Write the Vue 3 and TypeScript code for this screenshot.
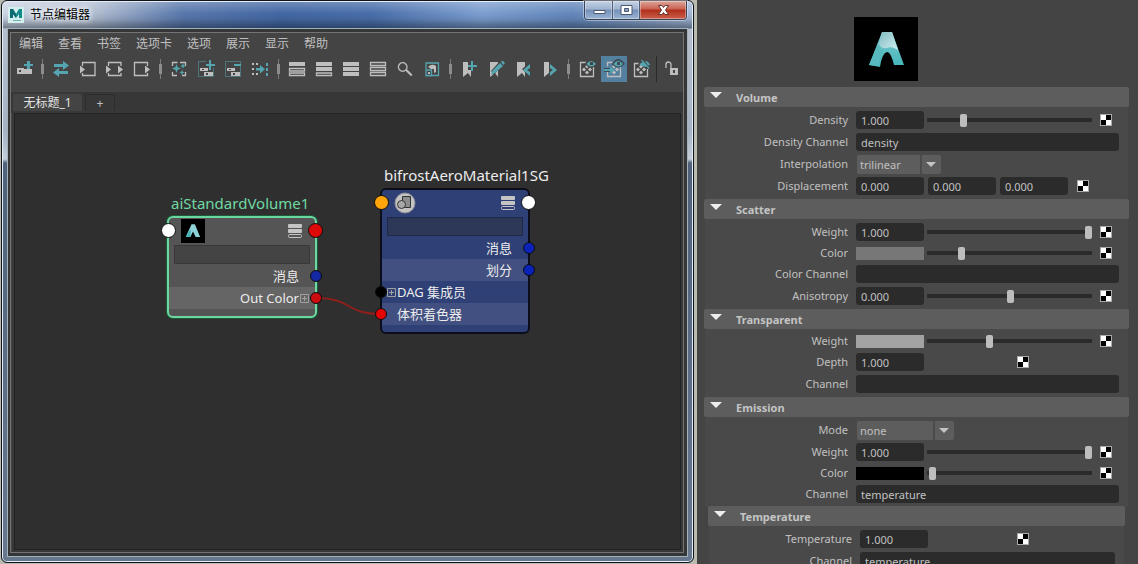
<script setup lang="ts">
import { ref } from 'vue'

type Tone = 'g' | 't' | 'gs' | 'ts' | 'd' | 'dash' | 'gdash'
type Part = [Tone, string]
interface Tool { label: string; parts?: Part[]; active?: boolean; sep?: boolean }

const menus = ['编辑', '查看', '书签', '选项卡', '选项', '展示', '显示', '帮助']

const eye = 'M12.500 8Q17 2 22 8Q17 13 12.500 8Z'
const eyeGap = 'M10.500 8Q17-2 24 8Q17 15 10.500 8Z'
const pupil = 'M16 6h3v3h-3z'
const dice = 'M13 8.500l2 2-2 2-2-2zM10 11.500l2 2-2 2-2-2zM16 11.500l2 2-2 2-2-2zM13 14.500l2 2-2 2-2-2z'
const flag = 'M7 6h8v15l-3-4-5 4z'
const twoBoxes = 'M7 12h8v3H7zM11 16h9v4h-9z'

const tools: Tool[] = [
  { label: '创建节点', parts: [['g', 'M6 12h8v1h7v5H6z'], ['d', 'M8 14h2v2H8z'], ['d', 'M13 4h8v9h-8z'], ['t', 'M16 5h3v3h3v2h-3v3h-3v-3h-3V8h3z'], ['g', 'M14 14h7v4h-7z']] },
  { label: '', sep: true },
  { label: '重新排列图表', parts: [['t', 'M6 8h9V5l6 4.500-6 4.500v-3H6z'], ['t', 'M20 15h-9v-3l-6 4.500 6 4.500v-3h9z']] },
  { label: '输入连接', parts: [['gs', 'M7.500 10V6.500h12.500v13H7.500V17'], ['g', 'M5 9.500l5 4-5 4z']] },
  { label: '输入和输出连接', parts: [['gs', 'M6.500 10V6.500h12.500V10M6.500 17v2.500h12.500V17'], ['g', 'M4 9.500l5 4-5 4zM16 9.500l5 4-5 4z']] },
  { label: '输出连接', parts: [['gs', 'M18.500 10V6.500h-13v13h13V17'], ['g', 'M16 9.500l5 4-5 4z']] },
  { label: '', sep: true },
  { label: '清除图表', parts: [['gs', 'M6.500 10V6.500h5M14 6.500h5.500V10M19.500 16v3.500H16M11 19.500H6.500V16'], ['t', 'M10.500 8l1.200 3.300L15 12.500l-3.300 1.200L10.500 17l-1.200-3.300L6 12.500l3.300-1.200zM17 7l.8 2.200L20 10l-2.200.8L17 13l-.8-2.200L14 10l2.200-.8zM16 14l.8 1.700 1.700.8-1.700.8L16 19l-.8-1.700-1.700-.8 1.700-.8z']] },
  { label: '将选定节点添加到图表', parts: [['dash', 'M5.500 5.500h15v15h-15z'], ['g', twoBoxes], ['d', 'M9 13h2v1H9zM13 17h2v2h-2z'], ['d', 'M13 4h9v8h-9z'], ['t', 'M16 4h2v4h4v2h-4v4h-2v-4h-3V8h3z']] },
  { label: '从图表中移除选定节点', parts: [['dash', 'M5.500 5.500h15v15h-15z'], ['g', twoBoxes], ['d', 'M9 13h2v1H9zM13 17h2v2h-2z'], ['t', 'M14 8h7v2h-7z']] },
  { label: '扩展节点', parts: [['g', 'M5 7h2v2H5zM5 12h2v2H5zM5 17h2v2H5zM9 17h2v2H9zM9 7h2v2H9z'], ['t', 'M9 12h4V9l5 4.200-5 4.200V14.500H9zM19 7h2v3h-2zM19 12h2v3h-2zM19 17h2v3h-2z']] },
  { label: '', sep: true },
  { label: '简单模式', parts: [['g', 'M5 6h16v4H5z'], ['gs', 'M5.500 12.500h15v2.500h-15zM5.500 17h15v2.500h-15z']] },
  { label: '已连接模式', parts: [['g', 'M5 6h16v4H5zM5 11h16v4H5z'], ['gs', 'M5.500 17h15v2.500h-15z']] },
  { label: '完全模式', parts: [['g', 'M5 6h16v4H5zM5 11h16v4H5zM5 16h16v4H5z']] },
  { label: '自定义模式', parts: [['gs', 'M5.500 6.500h15v3h-15zM5.500 11.500h15v3h-15zM5.500 16.500h15v3h-15z']] },
  { label: '过滤器', parts: [['gs', 'M15 11a4.300 4.300 0 1 1-8.600 0a4.300 4.300 0 1 1 8.600 0'], ['gs', 'M14 14.200l5.500 5.500M14.500 13.800l5.500 5.500']] },
  { label: '样例大小', parts: [['ts', 'M7 7h12.500v12.500H7z'], ['g', 'M9 11q4-4 8-1v6l-2 1v-4h-3z'], ['d', 'M6 13h7v7H6z'], ['ts', 'M7 14h5.500v5.500H7z'], ['g', 'M9 16h2v2H9z']] },
  { label: '', sep: true },
  { label: '创建书签', parts: [['g', flag], ['d', 'M12 4h9v10h-9z'], ['t', 'M15 5h2v4h4v2h-4v4h-2v-4h-3V9h3z']] },
  { label: '编辑书签', parts: [['g', flag], ['d', 'M8 15L17 5h5L11 19z'], ['t', 'M8 19l1-4 8-8 3 3-8 7zM18 6l1.500-1.500L22 7l-1.500 2z']] },
  { label: '上一个书签', parts: [['g', flag], ['d', 'M12 13l7-6h3v13h-3z'], ['t', 'M20 8v4l-3 2 3 2v4l-7-6z']] },
  { label: '下一个书签', parts: [['g', flag], ['d', 'M12 6h3l8 7-8 8h-3z'], ['t', 'M13 8v4l3 2-3 2v4l7-6z']] },
  { label: '', sep: true },
  { label: '切换样例显示', parts: [['gs', 'M13 6.500H6.500v14h13V11'], ['g', dice], ['d', eyeGap], ['t', eye], ['d', pupil]] },
  { label: '连接时展开', active: true, parts: [['gs', 'M13 6.500H6.500v4M6.500 16v4.500h13V11'], ['g', dice], ['d', eyeGap], ['t', eye], ['d', pupil], ['d', 'M3 12h7v4H3z'], ['t', 'M3 13h6v-2.500l5 3.500-5 3.500V15H3z']] },
  { label: '隐藏样例', parts: [['gs', 'M11 7.500H6.500v13h13V13'], ['g', dice], ['d', 'M10 8Q15 1 22 6V13Z'], ['t', 'M11.500 8.500Q13 6 15 6l-2-1.500 1-1 7.500 8.500-1 1-2-2.500q-4 1-7-2zM17 5q3.500 0 5 4l-2 .5z']] },
]

interface Port { side: 'in' | 'out'; color: string }
interface Attr { text: string; port: Port; expand?: boolean; lit?: boolean }
interface GraphNode {
  id: string; kind: 'volume' | 'group'; x: number; y: number; w: number
  ports: Port[]; attrs: Attr[]
}

const nodes: GraphNode[] = [
  {
    id: 'aiStandardVolume1', kind: 'volume', x: 152, y: 102, w: 150,
    ports: [{ side: 'in', color: '#ffffff' }, { side: 'out', color: '#dd0808' }],
    attrs: [
      { text: '消息', port: { side: 'out', color: '#1528a4' } },
      { text: 'Out Color', port: { side: 'out', color: '#cc0c10' }, expand: true, lit: true },
    ],
  },
  {
    id: 'bifrostAeroMaterial1SG', kind: 'group', x: 365, y: 74, w: 150,
    ports: [{ side: 'in', color: '#ffa50a' }, { side: 'out', color: '#ffffff' }],
    attrs: [
      { text: '消息', port: { side: 'out', color: '#0b22b8' } },
      { text: '划分', port: { side: 'out', color: '#0b22b8' }, lit: true },
      { text: 'DAG 集成员', port: { side: 'in', color: '#000000' }, expand: true },
      { text: '体积着色器', port: { side: 'in', color: '#e40505' }, lit: true },
    ],
  },
]

interface Row {
  label: string
  nums?: string[]
  text?: string
  choice?: string
  wide?: boolean
  swatch?: string
  slider?: number
  map?: 'near' | 'far' | 'end'
}
interface Section { title: string; nested?: boolean; rows: Row[] }

const sections = ref<Section[]>([
  { title: 'Volume', rows: [
    { label: 'Density', nums: ['1.000'], slider: 209, map: 'end' },
    { label: 'Density Channel', text: 'density' },
    { label: 'Interpolation', choice: 'trilinear' },
    { label: 'Displacement', nums: ['0.000', '0.000', '0.000'], map: 'near' },
  ] },
  { title: 'Scatter', rows: [
    { label: 'Weight', nums: ['1.000'], slider: 1000, map: 'end' },
    { label: 'Color', swatch: '#777777', slider: 196, map: 'end' },
    { label: 'Color Channel', text: '' },
    { label: 'Anisotropy', nums: ['0.000'], slider: 506, map: 'end' },
  ] },
  { title: 'Transparent', rows: [
    { label: 'Weight', swatch: '#a3a3a3', slider: 376, map: 'end' },
    { label: 'Depth', nums: ['1.000'], map: 'far' },
    { label: 'Channel', text: '' },
  ] },
  { title: 'Emission', rows: [
    { label: 'Mode', choice: 'none', wide: true },
    { label: 'Weight', nums: ['1.000'], slider: 1000, map: 'end' },
    { label: 'Color', swatch: '#000000', slider: 13, map: 'end' },
    { label: 'Channel', text: 'temperature' },
  ] },
  { title: 'Temperature', nested: true, rows: [
    { label: 'Temperature', nums: ['1.000'], map: 'far' },
    { label: 'Channel', text: 'temperature' },
  ] },
])
</script>

<template>
  <main class="app">
    <section class="window">
      <header class="titlebar">
        <svg class="logo" viewBox="0 0 16 16" aria-hidden="true">
          <rect width="16" height="16" fill="#d5eeee" />
          <path d="M2 11V2h3l3 5 3-5h3v9h-3V7l-3 4-3-4v4z" fill="#14898c" />
          <path d="M2 2h3l3 5v4L5 7v4H2z" fill="#0b6c74" />
          <path d="M5 13.500h8" stroke="#6ab4b4" />
        </svg>
        <h1>节点编辑器</h1>
        <div class="controls">
          <button class="min" aria-label="最小化"><svg viewBox="0 0 16 12"><path d="M3 6.500h11v3H3z" fill="#fff" stroke="#4c5870" /></svg></button>
          <button class="max" aria-label="最大化"><svg viewBox="0 0 16 12"><path d="M3 1.500h11v9H3z" fill="#fff" stroke="#4c5870" /><path d="M6.500 4.500h4v3h-4z" fill="#8fa4c0" stroke="#4c5870" /></svg></button>
          <button class="close" aria-label="关闭"><svg viewBox="0 0 16 12"><path d="M3.500 1.500h3.500l1.500 2 1.500-2h3.500L10.500 6l3 4.500H10l-1.500-2-1.500 2H3.500l3-4.500z" fill="#fff" stroke="#6a3430" /></svg></button>
        </div>
      </header>

      <div class="client">
        <div class="frame">
          <nav class="menubar">
            <button v-for="m in menus" :key="m">{{ m }}</button>
          </nav>

          <div class="toolbar">
            <template v-for="(t, i) in tools" :key="i">
              <span v-if="t.sep" class="sep"></span>
              <button v-else class="tool" :class="{ active: t.active }" :aria-label="t.label">
                <svg viewBox="0 0 26 26"><path v-for="(p, k) in t.parts" :key="k" :class="p[0]" :d="p[1]" /></svg>
              </button>
            </template>
            <button class="tool lock" aria-label="锁定">
              <svg viewBox="0 0 26 26"><path class="gs" d="M8 12V8.500a2.500 2.500 0 0 1 5 0V13" /><path class="g" d="M12 12h8v7h-8z" /><path class="d" d="M15 14h2v3h-2z" /></svg>
            </button>
          </div>

          <div class="tabs">
            <button class="tab current">无标题_1</button>
            <button class="tab add">+</button>
          </div>

          <div class="canvas">
            <svg class="wires" aria-hidden="true"><path d="M301 184C338 184 329 200 366 200" /></svg>
            <article
              v-for="n in nodes" :key="n.id" class="node" :class="n.kind"
              :style="{ left: n.x + 'px', top: n.y + 'px', width: n.w + 'px' }"
            >
              <h2>{{ n.id }}</h2>
              <div class="head">
                <svg v-if="n.kind === 'volume'" width="24" height="24" viewBox="0 0 64 64" aria-hidden="true">
                  <rect width="64" height="64" fill="#000" />
                  <path d="M28 14h9l14 34H39l-7-15-7 15H13z" fill="#8dd3d8" />
                  <path d="M27 30l-2 18H13l7-17z" fill="#4fb3ba" />
                </svg>
                <svg v-else class="group-icon" width="22" height="22" viewBox="0 0 22 22" aria-hidden="true">
                  <circle cx="11" cy="11" r="10" fill="#c4c4c4" stroke="#8f8f96" />
                  <path d="M8.500 4.500h8v11h-8z" fill="#8c8c8c" stroke="#333" />
                  <circle cx="7.500" cy="12.500" r="4" fill="#a8a8a8" stroke="#333" />
                </svg>
                <svg class="bars" width="14" height="14" viewBox="0 0 14 14" aria-hidden="true">
                  <rect width="14" height="4" rx="1" fill="#c4c4c4" /><rect y="5" width="14" height="4" rx="1" fill="#c4c4c4" />
                  <rect x=".5" y="10.500" width="13" height="3" rx="1" fill="none" stroke="#c4c4c4" />
                </svg>
                <i v-for="p in n.ports" :key="p.side" class="port big" :class="p.side" :style="{ background: p.color }"></i>
              </div>
              <input class="filter" type="text" :aria-label="n.id + ' 过滤'" />
              <div v-for="a in n.attrs" :key="a.text" class="attr" :class="[a.port.side, { lit: a.lit }]">
                <span>{{ a.text }}</span>
                <button v-if="a.expand" class="expand" :aria-label="'展开 ' + a.text">
                  <svg viewBox="0 0 9 9"><path d="M.5.5h8v8h-8zM4.500 2v5M2 4.500h5" /></svg>
                </button>
                <i class="port" :class="a.port.side" :style="{ background: a.port.color }"></i>
              </div>
            </article>
          </div>
        </div>
      </div>
    </section>

    <aside class="panel">
      <svg class="preview" width="64" height="64" viewBox="0 0 64 64" role="img" aria-label="材质样例">
        <defs>
          <linearGradient id="leg" x1="0" y1="0" x2="0" y2="1"><stop offset="0" stop-color="#7dc9cf" /><stop offset="1" stop-color="#43b5b9" /></linearGradient>
          <linearGradient id="cap" x1="0" y1="0" x2="1" y2="1"><stop offset="0" stop-color="#82bcc2" /><stop offset="1" stop-color="#d0eff1" /></linearGradient>
        </defs>
        <rect width="64" height="64" fill="#000" />
        <path d="M28 15h10l12 33H40Q37 35 33 35Q28 36 26 50L15 48z" fill="url(#leg)" />
        <path d="M28 15h10l6 18Q38 29 33 31Q27 32 25 27z" fill="url(#cap)" />
        <path d="M24 27q1 4 5 7-3 4-4 15L15 48z" fill="#58babf" />
      </svg>

      <section v-for="s in sections" :key="s.title" class="group" :class="{ nested: s.nested }">
        <button class="group-head" aria-expanded="true"><i></i><span>{{ s.title }}</span></button>
        <div class="group-body">
          <div v-for="(r, i) in s.rows" :key="i" class="row" :class="{ short: r.swatch }">
            <label :for="s.title + i">{{ r.label }}</label>
            <div class="ctl">
              <div v-if="r.nums" class="nums">
                <input v-for="(_, k) in r.nums" :id="k === 0 ? s.title + i : undefined" :key="k" v-model="r.nums[k]" class="num" type="text" :aria-label="r.label + ' ' + (k + 1)" />
              </div>
              <input v-if="r.text !== undefined" :id="s.title + i" v-model="r.text" class="long" type="text" />
              <span v-if="r.choice" class="choice" :class="{ wide: r.wide }">
                <select :id="s.title + i" v-model="r.choice"><option>{{ r.choice }}</option></select>
              </span>
              <button v-if="r.swatch" :id="s.title + i" class="swatch" :style="{ background: r.swatch }"></button>
              <input v-if="r.slider !== undefined" v-model.number="r.slider" class="slider" type="range" min="0" max="1000" :aria-label="r.label + ' slider'" />
              <button v-if="r.map" class="map" :class="r.map" :aria-label="r.label + ' map'"></button>
            </div>
          </div>
        </div>
      </section>
    </aside>
  </main>
</template>

<style>
html, body { background: #444; }
</style>

<style scoped>
* { box-sizing: border-box; }
h1, h2 { margin: 0; font-weight: normal; }
button, input, select { font: inherit; color: inherit; border: 0; padding: 0; margin: 0; background: none; border-radius: 0; outline: 0; }
svg { display: block; }

.app {
  display: grid;
  grid-template-columns: minmax(0, 1fr) 444px;
  height: 100vh;
  overflow: hidden;
  background: #b9bab0;
  color: #c0c0c0;
  font: 12px/16px "Noto Sans", "Noto Sans CJK SC", sans-serif;
}

/* window chrome */
.window {
  display: flex;
  flex-direction: column;
  margin: 0 0 1px 1px;
  padding: 0 5px 5px;
  border: 1px solid #10131c;
  border-radius: 6px;
  box-shadow: inset 0 0 0 1px #e6eef6;
  background:
    linear-gradient(180deg, rgba(255, 255, 255, .25), rgba(255, 255, 255, 0) 12px, rgba(20, 30, 50, .1) 18px, rgba(10, 20, 30, .45) 27px, transparent 28px) 0 0 / 100% 28px no-repeat,
    linear-gradient(90deg, #ccd5e3 0, #b3bfd2 90px, #5a79ad 180px, #4468a4 280px, #4a6faa 370px, #7d9fd0 480px, #6488bb 570px, #a4b8d4 100%) 0 0 / 100% 28px no-repeat,
    linear-gradient(180deg, #b9c2cf 0, #a6b2c3 130px, #c4ced9 158px, #50627b 162px, #66778e 100%);
}
.titlebar { display: flex; align-items: flex-start; height: 27px; color: #000; }
.logo { width: 16px; height: 16px; margin: 6px 6px 0 1px; }
h1 { flex: 1; margin-top: 6px; font-size: 12px; line-height: 16px; text-shadow: 0 0 6px #fff, 0 0 6px #fff; }
.controls { display: flex; height: 19px; margin-right: 1px; border: 1px solid #39445a; border-top: 0; border-radius: 0 0 4px 4px; overflow: hidden; box-shadow: 0 0 0 1px rgba(255, 255, 255, .4); }
.controls button { display: flex; align-items: center; justify-content: center; width: 28px; background: linear-gradient(#c4d2e4, #9fb3cf 45%, #7490b8 50%, #9bb4d4); border-right: 1px solid #4d5b74; box-shadow: inset 0 0 0 1px rgba(255, 255, 255, .35); }
.controls .max { width: 27px; }
.controls .close { width: 46px; border: 0; background: linear-gradient(#dca79c, #c9604f 45%, #b02e1c 50%, #c9604a); }
.controls svg { width: 16px; height: 12px; }

.client { flex: 1; display: flex; min-height: 0; padding: 3px 3px 3px 2px; border: 1px solid #a3b1bc; background: #343638; }
.frame { flex: 1; display: flex; flex-direction: column; min-width: 0; border: 1px solid #747474; background: #444; }

.menubar { display: flex; gap: 15px; height: 22px; padding: 0 8px; }
.menubar button { white-space: nowrap; }
.toolbar { display: flex; gap: 1px; padding: 1px 0 10px; }
.tool { flex: none; width: 26px; height: 26px; color: #444; }
.tool svg { width: 26px; height: 26px; }
.tool.active { background: #5480a0; color: #3c4c58; }
.sep { flex: none; width: 9px; height: 20px; margin-top: 3px; background: linear-gradient(#8c8c8c, #8c8c8c) center / 3px 10px no-repeat, linear-gradient(#7c7c7c, #7c7c7c) center / 1px 20px no-repeat; }
.lock { margin-left: 1px; padding-left: 1px; width: 28px; border-left: 1px solid #2b2b2b; }
.g { fill: #bebebe; }
.t { fill: #55a5b0; }
.gs { fill: none; stroke: #bebebe; stroke-width: 1.3; }
.ts { fill: none; stroke: #55a5b0; stroke-width: 1.3; }
.d { fill: currentColor; }
.dash { fill: none; stroke: #55a5b0; stroke-dasharray: 1 1; }

.tabs { display: flex; gap: 3px; height: 21px; padding: 2px 2px 0; background: #373737; }
.tab { height: 18px; border-radius: 2px 2px 0 0; line-height: 18px; }
.current { width: 69px; background: #444; color: #e2e2e2; }
.add { width: 30px; border: 1px solid #2c2c2c; border-bottom: 0; line-height: 16px; }

/* graph */
.canvas { flex: 1; position: relative; border: 1px solid #222; outline: 2px solid #383838; margin: 0 2px 2px 3px; background: #2f2f2f; overflow: hidden; }
.wires { position: absolute; inset: 0; width: 100%; height: 100%; }
.wires path { fill: none; stroke: #8e201c; stroke-width: 2; }
.node { position: absolute; border: 2px solid; border-radius: 6px; padding-bottom: 7px; font-size: 13px; color: #ececec; }
.volume { border-color: #6cd8a0; background: #555; box-shadow: 0 0 0 1px #1f5a3c; }
.group { min-width: 0; }
.node.group { border-color: #0b0e1a; background: #2e4076; }
.node h2 { position: absolute; left: 2px; bottom: 100%; margin-bottom: 5px; font-size: 15px; line-height: 20px; white-space: nowrap; }
.volume h2 { color: #6fd9a3; }
.head { position: relative; display: flex; align-items: center; height: 27px; padding: 0 13px 2px 12px; }
.bars { margin-left: auto; }
.filter { display: block; width: calc(100% - 10px); height: 19px; margin: 0 5px 1px; background: #444; border: 1px solid #383838; }
.node.group .filter { background: #2d3757; border-color: #1f2947; }
.attr { position: relative; display: flex; align-items: center; height: 22px; padding: 0 16px 0 15px; white-space: nowrap; line-height: 20px; }
.attr.out { justify-content: flex-end; }
.volume .lit { background: #656565; }
.node.group .lit { background: #415081; }
.port { position: absolute; top: 5px; width: 12px; height: 12px; border: 1px solid #0c0c0c; border-radius: 50%; }
.port.in { left: -7px; }
.port.out { right: -7px; }
.port.big { top: 5px; width: 15px; height: 15px; }
.port.big.in { left: -8px; }
.port.big.out { right: -8px; }
.expand { position: absolute; top: 7px; width: 9px; height: 9px; }
.out .expand { right: 6px; }
.in .expand { left: 5px; }
.expand svg { width: 9px; height: 9px; fill: none; stroke: #a0a0a0; }

/* attributes */
.panel { padding: 17px 9px 0 7px; border-left: 3px solid #b9bab0; background: #444; overflow: hidden; font-size: 11px; }
.preview { margin: 0 0 6px 150px; }
.group-head { display: flex; align-items: center; width: 100%; height: 20px; padding-left: 6px; border-radius: 2px; background: #5d5d5d; color: #c4c4c4; font-weight: bold; }
.group-head span { padding-top: 2px; }
.group-head i { width: 12px; margin: 0 14px 4px 0; border: 6px solid transparent; border-top-color: #eee; border-bottom: 0; }
.group-body { margin: 0 1px; padding: 2px 0; background: #494949; }
.nested { margin: -1px 4px 0; }
.row { display: flex; align-items: center; height: 22px; padding-right: 9px; }
.short { height: 20px; }
.row label { flex: none; width: 143px; margin-right: 8px; text-align: right; }
.ctl { flex: 1; display: flex; align-items: center; min-width: 0; }
.nums { display: flex; gap: 4px; }
.num, .long { height: 18px; padding: 1px 5px 0; border-radius: 3px; background: #2b2b2b; }
.num { width: 68px; }
.long { width: 100%; }
.swatch { width: 68px; height: 13px; }
.choice { position: relative; width: 84px; height: 19px; margin-left: 1px; background: #5d5d5d; border-radius: 2px; }
.choice.wide { width: 97px; }
.choice select { width: 100%; height: 19px; padding: 2px 22px 0 3px; appearance: none; }
.choice::before { content: ""; position: absolute; right: 19px; top: 0; width: 2px; height: 100%; background: #4b4b4b; }
.choice::after { content: ""; position: absolute; right: 5px; top: 7px; border: 5px solid transparent; border-top-color: #c4c4c4; border-bottom: 0; pointer-events: none; }
.slider { appearance: none; flex: 1; min-width: 0; height: 13px; margin: 0 8px 0 3px; background: linear-gradient(#2b2b2b, #2b2b2b) center / 100% 4px no-repeat; }
.slider::-webkit-slider-thumb { appearance: none; width: 7px; height: 13px; border-radius: 2px; background: #bdbdbd; }
.map { width: 12px; height: 12px; border: 1px solid #aaa; background: conic-gradient(#000 25%, #fff 0 50%, #000 0 75%, #fff 0); }
.map.end { margin-right: 7px; }
.map.near { margin-left: 9px; }
.map.far { margin-left: 93px; }
.nested .map.far { margin-left: 89px; }
</style>
